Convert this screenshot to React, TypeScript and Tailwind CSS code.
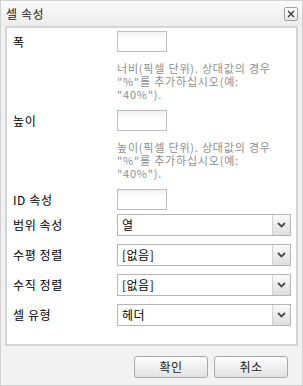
import React from "react";

const font = "font-['Noto_Sans_CJK_KR','Noto_Sans',sans-serif]";

function TextBox() {
  return (
    <div className="w-[50px] h-[21px] border border-[#bdbdbd] bg-gradient-to-b from-[#f1f1f1] to-white to-40%" />
  );
}

function Chevron() {
  return (
    <svg width="9" height="6" viewBox="0 0 9 6">
      <path d="M1 1 L4.5 4.5 L8 1" fill="none" stroke="#4a4a4a" strokeWidth="1.8" />
    </svg>
  );
}

function SelectBox({ value }: { value: string }) {
  return (
    <div className="w-[174px] h-[22px] border border-[#b5b5b5] bg-white flex items-stretch">
      <div className="flex-1 flex items-center pl-[4px] text-[12px] leading-none tracking-[0.5px] text-black">{value}</div>
      <div className="w-[18px] border-l border-[#d2d2d2] bg-gradient-to-b from-[#fafafa] to-[#dedede] flex items-center justify-center">
        <Chevron />
      </div>
    </div>
  );
}

function Hint({ lines }: { lines: string[] }) {
  return (
    <div className="flex flex-col gap-[1px] text-[11px] leading-[12px] tracking-[0.8px] text-[#8e8e8e]">
      {lines.map((l, i) => (
        <div key={i} className="whitespace-nowrap">{l}</div>
      ))}
    </div>
  );
}

function Label({ children }: { children: React.ReactNode }) {
  return <div className="w-[104px] text-[12px] leading-none tracking-[0.6px] text-black">{children}</div>;
}

function Button({ children }: { children: React.ReactNode }) {
  return (
    <div className="w-[74px] h-[22px] rounded-[3px] border border-[#a9a9a9] bg-gradient-to-b from-[#fdfdfd] to-[#e2e2e2] flex items-center justify-center text-[12px] leading-none tracking-[0.5px] text-[#222]">
      {children}
    </div>
  );
}

export default function App() {
  return (
    <div className={`w-[303px] h-[386px] bg-[#f2f2f2] border border-[#d0d0d0] flex flex-col ${font}`}>
      <div className="h-[25px] flex items-center justify-between pl-[5px] pr-[4px] bg-gradient-to-b from-[#fbfbfb] to-[#ececec]">
        <span className="text-[12px] leading-none tracking-[0.6px] text-[#222]">셀 속성</span>
        <div className="w-[14px] h-[14px] rounded-[2px] border border-[#a3a3a3] bg-gradient-to-b from-white to-[#e6e6e6] flex items-center justify-center">
          <svg width="8" height="8" viewBox="0 0 8 8">
            <path d="M1 1 L7 7 M7 1 L1 7" stroke="#333" strokeWidth="1.3" />
          </svg>
        </div>
      </div>

      <div className="mx-[4px] h-[320px] border-2 border-[#d5d5d5] bg-white pl-[6px] pt-[3px] flex flex-col">
        <div className="flex items-center">
          <Label>폭</Label>
          <TextBox />
        </div>
        <div className="ml-[104px] mt-[10px]">
          <Hint lines={["너비(픽셀 단위). 상대값의 경우", "\"%\"를 추가하십시오(예:", "\"40%\")."]} />
        </div>

        <div className="flex items-center mt-[10px]">
          <Label>높이</Label>
          <TextBox />
        </div>
        <div className="ml-[104px] mt-[10px]">
          <Hint lines={["높이(픽셀 단위). 상대값의 경우", "\"%\"를 추가하십시오(예:", "\"40%\")."]} />
        </div>

        <div className="flex items-center mt-[10px]">
          <Label>ID 속성</Label>
          <TextBox />
        </div>

        <div className="flex flex-col gap-[8px] mt-[4px]">
          <div className="flex items-center">
            <Label>범위 속성</Label>
            <SelectBox value="열" />
          </div>
          <div className="flex items-center">
            <Label>수평 정렬</Label>
            <SelectBox value="[없음]" />
          </div>
          <div className="flex items-center">
            <Label>수직 정렬</Label>
            <SelectBox value="[없음]" />
          </div>
          <div className="flex items-center">
            <Label>셀 유형</Label>
            <SelectBox value="헤더" />
          </div>
        </div>
      </div>

      <div className="flex justify-end gap-[6px] pr-[14px] mt-[10px]">
        <Button>확인</Button>
        <Button>취소</Button>
      </div>
    </div>
  );
}
